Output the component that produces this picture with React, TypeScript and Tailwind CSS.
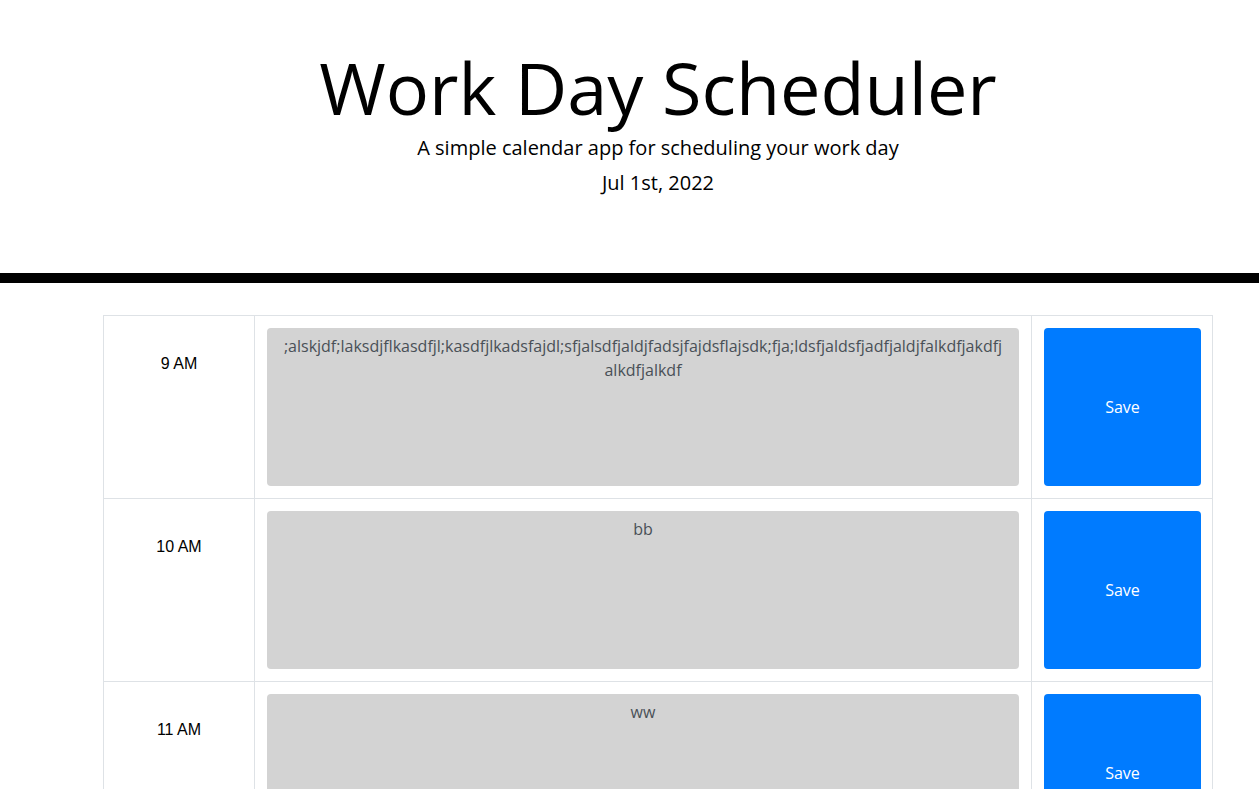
import React from "react";

const rows = [
  { hour: "9 AM", text: ";alskjdf;laksdjflkasdfjl;kasdfjlkadsfajdl;sfjalsdfjaldjfadsjfajdsflajsdk;fja;ldsfjaldsfjadfjaldjfalkdfjakdfjalkdfjalkdf" },
  { hour: "10 AM", text: "bb" },
  { hour: "11 AM", text: "ww" },
  { hour: "12 PM", text: "" },
  { hour: "1 PM", text: "" },
  { hour: "2 PM", text: "" },
  { hour: "3 PM", text: "" },
  { hour: "4 PM", text: "" },
  { hour: "5 PM", text: "" },
];

export default function App() {
  return (
    <div className="w-full overflow-hidden bg-white" style={{ fontFamily: "'Open Sans', sans-serif" }}>
      <div className="w-[1316px]">
        <header className="box-border flex h-[283px] flex-col items-center border-b-[10px] border-black pt-[44px] text-center text-black">
          <h1 className="m-0 text-[72px] font-normal leading-[1.2]">Work Day Scheduler</h1>
          <p className="m-0 mt-[3px] text-[20px] font-normal leading-[30px]">
            A simple calendar app for scheduling your work day
          </p>
          <p className="m-0 mt-[5px] text-[20px] font-normal leading-[30px]">Jul 1st, 2022</p>
        </header>
        <main className="mx-auto mt-[32px] w-[1110px] border-l border-t border-[#dee2e6]">
          {rows.map((r) => (
            <div key={r.hour} className="grid grid-cols-[151px_777px_181px] border-b border-[#dee2e6]">
              <div
                className="border-r border-[#dee2e6] pt-[36px] text-center text-[16px] font-normal leading-[24px] text-black"
                style={{ fontFamily: "'Liberation Sans', Arial, sans-serif" }}
              >
                {r.hour}
              </div>
              <div className="border-r border-[#dee2e6] p-[12px]">
                <textarea
                  defaultValue={r.text}
                  className="block h-[158px] w-full resize-none rounded-[4px] bg-[#d3d3d3] px-[16px] py-[6px] text-center text-[16px] leading-[24px] text-[#495057] outline-none"
                  style={{ fontFamily: "'Open Sans', sans-serif" }}
                />
              </div>
              <div className="border-r border-[#dee2e6] p-[12px] pr-[11px]">
                <button className="flex h-[158px] w-full items-center justify-center rounded-[4px] bg-[#007bff] text-[16px] leading-[24px] text-white">
                  Save
                </button>
              </div>
            </div>
          ))}
        </main>
      </div>
    </div>
  );
}
